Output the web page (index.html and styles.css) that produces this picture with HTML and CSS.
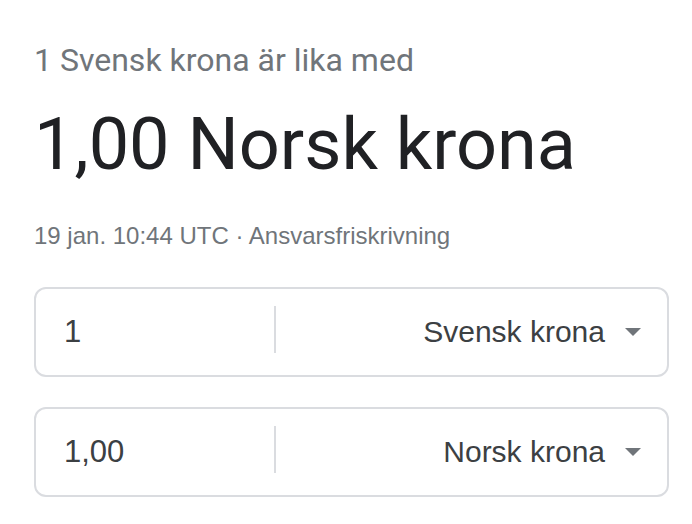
FILE: index.html
```html
<!DOCTYPE html>
<html lang="sv">
<head>
<meta charset="utf-8">
<title>Valutaomvandlare</title>
<link rel="stylesheet" href="styles.css">
</head>
<body>
<div class="converter">
  <div class="intro">1 Svensk krona är lika med</div>
  <div class="result">1,00 Norsk krona</div>
  <div class="meta">19 jan. 10:44 UTC · <span class="link">Ansvarsfriskrivning</span></div>
  <div class="boxes">
    <div class="box">
      <div class="amount">1</div>
      <div class="divider"></div>
      <div class="currency">
        <span class="name">Svensk krona</span>
        <svg class="caret" width="16" height="8" viewBox="0 0 16 8"><path d="M0 0h16L8 8z" fill="#70757a"/></svg>
      </div>
    </div>
    <div class="box">
      <div class="amount">1,00</div>
      <div class="divider"></div>
      <div class="currency">
        <span class="name">Norsk krona</span>
        <svg class="caret" width="16" height="8" viewBox="0 0 16 8"><path d="M0 0h16L8 8z" fill="#70757a"/></svg>
      </div>
    </div>
  </div>
</div>
</body>
</html>
```
FILE: styles.css
```css
html, body {
  margin: 0;
  padding: 0;
  background: #ffffff;
}
.converter {
  padding: 40px 23px 0 34px;
  font-family: Roboto, "Liberation Sans", Arial, sans-serif;
}
.intro {
  font-size: 32px;
  line-height: 40px;
  color: #70757a;
}
.result {
  font-family: Roboto, "Liberation Sans", sans-serif;
  font-size: 72px;
  line-height: 80px;
  color: #202124;
  margin-top: 25px;
}
.meta {
  font-family: "Liberation Sans", Arial, sans-serif;
  font-size: 24px;
  line-height: 28px;
  color: #70757a;
  margin-top: 37px;
}
.boxes {
  display: flex;
  flex-direction: column;
  gap: 30px;
  margin-top: 37px;
}
.box {
  display: flex;
  align-items: center;
  height: 90px;
  box-sizing: border-box;
  border: 2px solid #dadce0;
  border-radius: 12px;
  font-family: "Liberation Sans", Arial, sans-serif;
  color: #3c4043;
}
.amount {
  width: 210px;
  padding-left: 28px;
  font-size: 31px;
}
.divider {
  width: 2px;
  height: 47px;
  margin-bottom: 5px;
  background: #dadce0;
}
.currency {
  flex: 1;
  display: flex;
  justify-content: flex-end;
  align-items: center;
  gap: 20px;
  padding-right: 26px;
  font-size: 30px;
}
.caret {
  display: block;
}
```
